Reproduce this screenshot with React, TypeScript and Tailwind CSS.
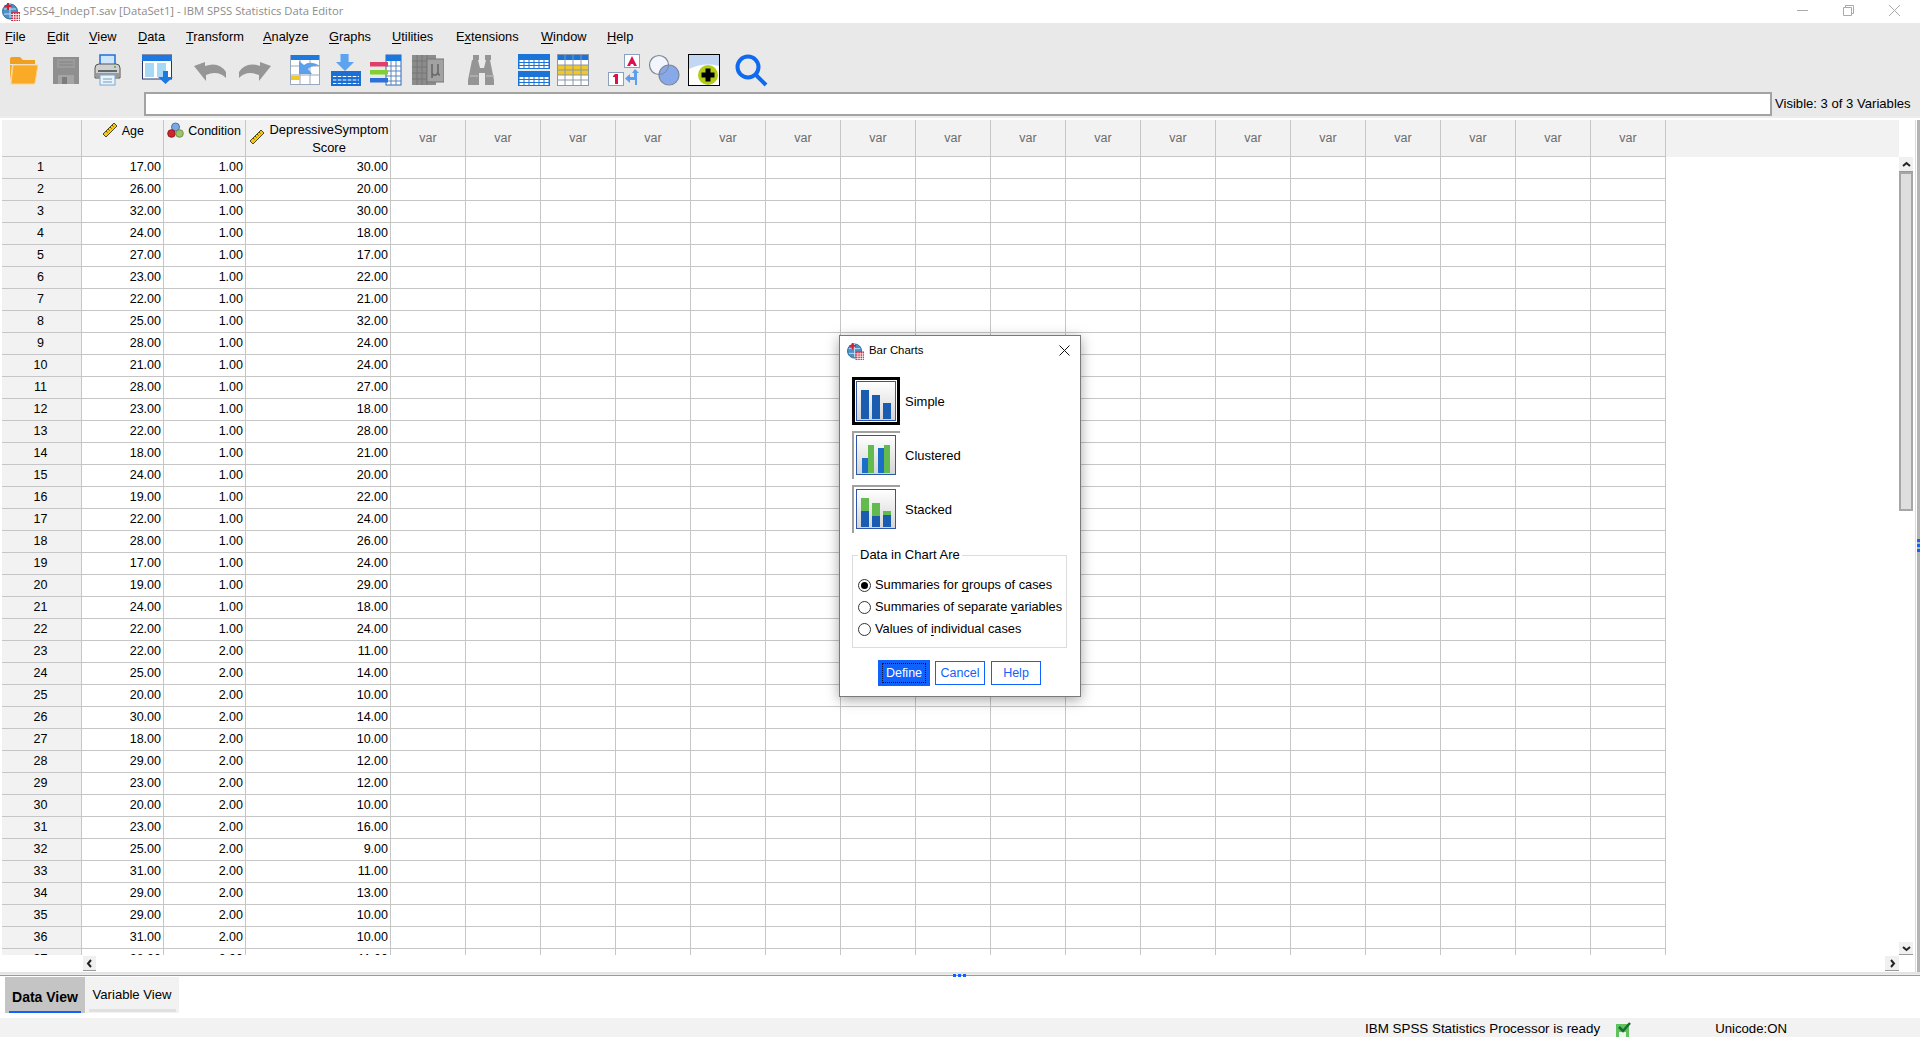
import React from "react";

const ages = [17,26,32,24,27,23,22,25,28,21,28,23,22,18,24,19,22,28,17,19,24,22,22,25,20,30,18,29,23,20,23,25,31,29,29,31,28];
const scores = [30,20,30,18,17,22,21,32,24,24,27,18,28,21,20,22,24,26,24,29,18,24,11,14,10,14,10,12,12,10,16,9,11,13,10,10,11];
const gridCols = "grid grid-cols-[80px_82px_82px_145px_repeat(17,75px)]";
const lineR = "border-r border-[#c6c6c6]";

const Ruler = () => (
  <svg width="16" height="16" viewBox="0 0 16 16" className="shrink-0">
    <path d="M1 12 L12 1 L15 4 L4 15 Z" fill="#f2c521" stroke="#4a4a2a" strokeWidth="1" />
    <path d="M4 9l1.5 1.5M6 7l1.5 1.5M8 5l1.5 1.5M10 3l1.5 1.5" stroke="#4a4a2a" strokeWidth="1" />
  </svg>
);
const Nominal = () => (
  <svg width="17" height="16" viewBox="0 0 17 16" className="shrink-0">
    <circle cx="8.5" cy="5" r="4" fill="#7da7e0" stroke="#4b74b0" />
    <circle cx="4.5" cy="11.5" r="3.8" fill="#d0242f" stroke="#8e1820" />
    <circle cx="12.5" cy="11.5" r="3.8" fill="#9cc46a" stroke="#6d9144" />
  </svg>
);
const AppIcon = ({ s = 18 }: { s?: number }) => (
  <svg width={s} height={s} viewBox="0 0 18 18" className="shrink-0">
    <circle cx="8" cy="8.5" r="7.5" fill="#4d8fc4" stroke="#2f6c9f" />
    <path d="M2 6h12M2 11h10M8 1v14" stroke="#bfe0f5" strokeWidth="1" />
    <path d="M6 0v7M2.5 3h7" stroke="#d81f30" strokeWidth="2" />
    <rect x="9" y="9" width="9" height="9" fill="#c8344a" />
    <path d="M9 11.5h9M9 14h9M9 16.5h9M11.5 10v8M14 10v8M16.5 10v8" stroke="#fff" strokeWidth="0.8" />
  </svg>
);

const Folder = ({ className }: { className: string }) => (
  <svg width="28" height="32" viewBox="0 0 28 32" className={className}>
    <path d="M0 5 Q0 3 2 3 H10 L13 6 H25 V10 H0 Z" fill="#f0a020" />
    <path d="M3 11 H28 L25 29 Q25 30 23 30 H1 Z" fill="#f9aa27" stroke="#fdd48c" strokeWidth="1" />
    <path d="M0 8 V27 L2 11 H0Z" fill="#f5a623" />
  </svg>
);
const Save = ({ className }: { className: string }) => (
  <svg width="26" height="32" viewBox="0 0 26 32" className={className}>
    <rect x="0" y="3" width="26" height="27" fill="#8f8f8f" />
    <rect x="4" y="5" width="18" height="9" fill="#9b9b9b" />
    <path d="M6 8h14M6 11h14" stroke="#848484" />
    <rect x="5" y="21" width="16" height="9" fill="#a5a5a5" />
    <rect x="9" y="23" width="5" height="7" fill="#7c7c7c" />
  </svg>
);
const Printer = ({ className }: { className: string }) => (
  <svg width="27" height="32" viewBox="0 0 27 32" className={className}>
    <rect x="6" y="1" width="15" height="12" fill="#cfe6fa" stroke="#1f6fd6" strokeWidth="1.5" />
    <path d="M1 14 Q1 10 5 10 H22 Q26 10 26 14 V24 H1 Z" fill="#cfd0d2" stroke="#555" />
    <rect x="4" y="16" width="19" height="2" fill="#666" />
    <rect x="20" y="12" width="2" height="2" fill="#52c452" />
    <rect x="2" y="19" width="23" height="4" fill="#9a9a9a" />
    <rect x="6" y="21" width="15" height="10" fill="#e8f3fc" stroke="#7aa8d6" />
    <path d="M9 25h9M9 28h9" stroke="#7c98b5" />
  </svg>
);
const GoTo = ({ className }: { className: string }) => (
  <svg width="31" height="32" viewBox="0 0 31 32" className={className}>
    <rect x="0.5" y="1" width="29" height="24" fill="#fff" stroke="#2c3566" />
    <rect x="0" y="1" width="30" height="6" fill="#1f78e0" />
    <rect x="3" y="9" width="9" height="14" fill="#a5d9f5" />
    <rect x="15" y="9" width="9" height="14" fill="#a5d9f5" />
    <path d="M21 17h5v6h5l-7.500 7-7.500-7h5z" fill="#1f78e0" />
  </svg>
);
const Undo = ({ className, flip }: { className: string; flip?: boolean }) => (
  <svg width="32" height="32" viewBox="0 0 32 32" className={className}>
    <g transform={flip ? "translate(32 0) scale(-1 1)" : undefined}>
      <path d="M0 12 L11 8 V12 Q25 7 32 18 V24 Q24 16 12 21 V27 Z" fill="#969696" />
    </g>
  </svg>
);
const GoVar = ({ className }: { className: string }) => (
  <svg width="30" height="32" viewBox="0 0 30 32" className={className}>
    <rect x="0.5" y="1.500" width="29" height="29" fill="#fff" stroke="#99a8bd" />
    <path d="M10 1v30M20 1v30M0 12h30M0 21h30" stroke="#99a8bd" />
    <rect x="1" y="1" width="28" height="5" fill="#1f78e0" />
    <rect x="1" y="22" width="9" height="4" fill="#f0c828" />
    <path d="M9 7 L14 11 Q20 6 30 12 Q22 11 18 15 L22 20 H9 Z" fill="#5c9fea" />
  </svg>
);
const Insert = ({ className }: { className: string }) => (
  <svg width="30" height="32" viewBox="0 0 30 32" className={className}>
    <path d="M5 0 h9 v9 h6 l-10 10 -10 -10 h5z" transform="translate(5 0) scale(0.9)" fill="#5ca4f0" />
    <rect x="0" y="17" width="30" height="15" fill="#1a6fd4" />
    <path d="M2 22.500h26M2 26h26M2 29.500h26" stroke="#fff" strokeWidth="1.2" />
    <path d="M6 21v9M11 21v9M16 21v9M21 21v9M26 21v9" stroke="#1a6fd4" strokeWidth="1.4" />
  </svg>
);
const VarIcon = ({ className }: { className: string }) => (
  <svg width="32" height="32" viewBox="0 0 32 32" className={className}>
    <rect x="16" y="1" width="15" height="30" fill="#fff" stroke="#2a66b8" />
    <rect x="16" y="1" width="15" height="6" fill="#1a78dc" />
    <path d="M16 12h15M16 17h15M16 22h15M16 27h15M21 7v24M26 7v24" stroke="#5a84bc" />
    <rect x="0" y="8" width="18" height="4.500" fill="#e04068" />
    <rect x="0" y="16" width="18" height="4.500" fill="#7fd030" />
    <rect x="0" y="24" width="18" height="4.500" fill="#2a70d8" />
  </svg>
);
const Mu = ({ className }: { className: string }) => (
  <svg width="32" height="32" viewBox="0 0 32 32" className={className}>
    <rect x="0" y="1" width="24" height="30" fill="#8c8c8c" />
    <path d="M5 1v30M10 1v30M15 1v30M0 7h24M0 13h24M0 19h24M0 25h24" stroke="#777" />
    <rect x="15" y="5" width="17" height="23" fill="#a2a2a2" stroke="#777" />
    <path d="M20 10v14M20 19q1 3 4 2q2-1 2-4v-7M26 18q0 3 2 3" stroke="#686868" strokeWidth="1.600" fill="none" />
  </svg>
);
const Binoc = ({ className }: { className: string }) => (
  <svg width="28" height="32" viewBox="0 0 28 32" className={className}>
    <path d="M5 1h6v5h-1l2 8h4l2-8h-1V1h6v5h-1l4 20v5H17V19h-6v12H0v-5l4-20h1z" fill="#959595" />
    <path d="M2 22h8M18 22h8" stroke="#b5b5b5" strokeWidth="1.500" />
  </svg>
);
const Tables = ({ className }: { className: string }) => (
  <svg width="32" height="32" viewBox="0 0 32 32" className={className}>
    <rect x="0" y="0" width="32" height="15" fill="#1a74d8" />
    <rect x="0" y="17" width="32" height="15" fill="#1a74d8" />
    <rect x="1.500" y="6" width="29" height="8" fill="#fff" />
    <rect x="1.500" y="23" width="29" height="8" fill="#fff" />
    <path d="M0 8.500h32M0 11.500h32M0 25.500h32M0 28.500h32" stroke="#1a74d8" />
    <path d="M6 6v8M11 6v8M16 6v8M21 6v8M26 6v8M6 23v8M11 23v8M16 23v8M21 23v8M26 23v8" stroke="#1a74d8" />
  </svg>
);
const YellowT = ({ className }: { className: string }) => (
  <svg width="32" height="32" viewBox="0 0 32 32" className={className}>
    <rect x="0.500" y="0.500" width="31" height="31" fill="#fff" stroke="#8a97ab" />
    <rect x="1" y="11" width="30" height="10" fill="#f0c828" />
    <rect x="1" y="1" width="30" height="5" fill="#1a74d8" />
    <path d="M8 1v30M16 1v30M24 1v30M0 11h32M0 16h32M0 21h32M0 26h32" stroke="#8a97ab" />
  </svg>
);
const AOne = ({ className }: { className: string }) => (
  <svg width="32" height="32" viewBox="0 0 32 32" className={className}>
    <rect x="16.500" y="0.500" width="15" height="13" fill="#fff" stroke="#8aa0c0" />
    <path d="M24 2 L29 12 H26 L25 10 H23 L22 12 H19 Z" fill="#e0104f" />
    <rect x="0.500" y="18.500" width="15" height="13" fill="#fff" stroke="#8aa0c0" />
    <path d="M7 20h3v10H7v-7H5v-1z" fill="#e0104f" />
    <path d="M27 15 L31 19 H29 V31 H27 V26 H22 V29 L17 24.500 L22 20 V23 H26 V19 H24 Z" fill="#5c9ff0" />
  </svg>
);
const Circles = ({ className }: { className: string }) => (
  <svg width="32" height="32" viewBox="0 0 32 32" className={className}>
    <circle cx="11" cy="11" r="9.500" fill="#f2f5fc" stroke="#7d8798" strokeWidth="1.200" />
    <circle cx="21" cy="21" r="10" fill="#87a9ea" stroke="#7d8798" strokeWidth="1.200" />
    <path d="M11 20.500a9.500 9.500 0 0 0 9.500-9.500" stroke="#7d8798" fill="none" />
  </svg>
);
const PlusBox = ({ className }: { className: string }) => (
  <svg width="32" height="32" viewBox="0 0 32 32" className={className}>
    <rect x="0.500" y="0.500" width="31" height="31" fill="#fff" stroke="#000" />
    <path d="M1 1h30v11q-15-4-30 3z" fill="#c2d8f2" />
    <circle cx="20" cy="21" r="10" fill="#b4cc16" />
    <path d="M17.500 14.500h5v4h4v5h-4v4h-5v-4h-4v-5h4z" fill="#000" />
  </svg>
);
const Magnifier = ({ className }: { className: string }) => (
  <svg width="33" height="33" viewBox="0 0 33 33" className={className}>
    <circle cx="13" cy="13" r="10.500" fill="none" stroke="#0f6af0" strokeWidth="4" />
    <path d="M20.500 20.500 L31 31" stroke="#0f6af0" strokeWidth="4" />
  </svg>
);

const U = ({ children }: { children: React.ReactNode }) => <span className="underline underline-offset-2">{children}</span>;

const menus: [string, string, string, string][] = [
  ["", "F", "ile", "w-[42px]"],
  ["", "E", "dit", "w-[42px]"],
  ["", "V", "iew", "w-[49px]"],
  ["", "D", "ata", "w-[48px]"],
  ["", "T", "ransform", "w-[77px]"],
  ["", "A", "nalyze", "w-[66px]"],
  ["", "G", "raphs", "w-[63px]"],
  ["", "U", "tilities", "w-[64px]"],
  ["E", "x", "tensions", "w-[85px]"],
  ["", "W", "indow", "w-[66px]"],
  ["", "H", "elp", "w-[40px]"],
];

const ChartIcon = ({ kind }: { kind: "simple" | "clustered" | "stacked" }) => (
  <svg width="40" height="40" viewBox="0 0 40 40">
    <defs>
      <linearGradient id={`g-${kind}`} x1="0" y1="0" x2="0" y2="1">
        <stop offset="0" stopColor="#ffffff" />
        <stop offset="1" stopColor="#d4d4d4" />
      </linearGradient>
    </defs>
    <rect x="0.500" y="0.500" width="39" height="39" fill={`url(#g-${kind})`} stroke="#2f56a8" />
    {kind === "simple" && (
      <g fill="#1a5cb0">
        <rect x="5" y="9" width="8" height="29" />
        <rect x="16" y="14" width="8" height="24" />
        <rect x="27" y="22" width="8" height="16" />
      </g>
    )}
    {kind === "clustered" && (
      <g>
        <rect x="6" y="23" width="6" height="15" fill="#1c6fc9" />
        <rect x="12" y="10" width="6" height="28" fill="#61bb4e" />
        <rect x="22" y="13" width="6" height="25" fill="#1c6fc9" />
        <rect x="28" y="10" width="6" height="28" fill="#61bb4e" />
      </g>
    )}
    {kind === "stacked" && (
      <g>
        <rect x="5" y="9" width="8" height="13" fill="#61bb4e" />
        <rect x="5" y="22" width="8" height="16" fill="#1a5cb0" />
        <rect x="16" y="14" width="8" height="13" fill="#61bb4e" />
        <rect x="16" y="27" width="8" height="11" fill="#1a5cb0" />
        <rect x="27" y="22" width="8" height="4" fill="#61bb4e" />
        <rect x="27" y="26" width="8" height="12" fill="#1a5cb0" />
      </g>
    )}
  </svg>
);

const Radio = ({ on, children }: { on?: boolean; children: React.ReactNode }) => (
  <div className="flex h-[22px] items-center pl-[5px]">
    <span className="flex h-[13px] w-[13px] items-center justify-center rounded-full border border-[#333] bg-white">
      {on && <span className="h-[7px] w-[7px] rounded-full bg-black" />}
    </span>
    <span className="ml-[4px] whitespace-nowrap text-[12.8px]">{children}</span>
  </div>
);

const Chev = ({ d }: { d: string }) => (
  <svg width="9" height="7" viewBox="0 0 9 7"><path d={d} fill="none" stroke="#222" strokeWidth="2" /></svg>
);
const ChevSide = ({ d }: { d: string }) => (
  <svg width="7" height="9" viewBox="0 0 7 9"><path d={d} fill="none" stroke="#222" strokeWidth="2" /></svg>
);

export default function App() {
  return (
    <div className="relative flex h-[1037px] w-[1920px] flex-col overflow-hidden bg-white font-['Liberation_Sans',Arial,sans-serif] text-[12.5px] text-black">
      {/* Title bar */}
      <div className="flex h-[23px] shrink-0 items-center bg-white pl-[2px]">
        <AppIcon s={18} />
        <span className="ml-[3px] font-['Open_Sans',sans-serif] text-[11.25px] text-[#8c8c8c]">SPSS4_IndepT.sav [DataSet1] - IBM SPSS Statistics Data Editor</span>
        <div className="-mt-[3px] ml-auto flex items-center gap-[35px] pr-[20px]">
          <svg width="11" height="11" viewBox="0 0 11 11"><path d="M0 5.500h11" stroke="#aaa" /></svg>
          <svg width="11" height="11" viewBox="0 0 11 11"><path d="M.5 2.500h8v8h-8zM2.500 2.500v-2h8v8h-2" fill="none" stroke="#aaa" /></svg>
          <svg width="11" height="11" viewBox="0 0 11 11"><path d="M0 0l11 11M11 0L0 11" stroke="#aaa" /></svg>
        </div>
      </div>

      {/* Menu + toolbar + formula bar */}
      <div className="h-[93px] shrink-0 bg-[#e9e9e9]">
        <div className="flex h-[26px] items-center pt-[1px] pl-[5px] text-[12.8px]">
          {menus.map(([a, b, c, w]) => (
            <span key={b + c} className={`${w} whitespace-nowrap`}>{a}<U>{b}</U>{c}</span>
          ))}
        </div>
        <div className="mt-[5px] flex h-[32px] items-start pl-[10px]">
          <Folder className="shrink-0" />
          <Save className="ml-[15px] shrink-0" />
          <Printer className="ml-[15px] shrink-0" />
          <GoTo className="ml-[21px] shrink-0" />
          <Undo className="ml-[21px] shrink-0" />
          <Undo flip className="ml-[13px] shrink-0" />
          <GoVar className="ml-[19px] shrink-0" />
          <Insert className="ml-[11px] shrink-0" />
          <VarIcon className="ml-[9px] shrink-0" />
          <Mu className="ml-[10px] shrink-0" />
          <Binoc className="ml-[24px] shrink-0" />
          <Tables className="ml-[22px] shrink-0" />
          <YellowT className="ml-[7px] shrink-0" />
          <AOne className="ml-[19px] shrink-0" />
          <Circles className="ml-[8px] shrink-0" />
          <PlusBox className="ml-[8px] shrink-0" />
          <Magnifier className="ml-[15px] shrink-0" />
        </div>
        <div className="mt-[6px] flex h-[24px] items-center pl-[144px]">
          <div className="h-[24px] w-[1628px] border-2 border-[#a3a3a3] bg-white" />
          <span className="ml-[3px] whitespace-nowrap text-[13.1px]">Visible: 3 of 3 Variables</span>
        </div>
      </div>

      {/* Data grid */}
      <div className="flex h-[860px] shrink-0 flex-col bg-white">
        <div className="flex h-[856px] border-t-[2px] border-[#ececec] pt-[2px]">
          <div className="flex w-[1899px] flex-col pl-[2px]">
            <div className="h-[835px] overflow-hidden">
              <div className={`${gridCols} h-[37px] w-[1897px] grid-rows-[37px] bg-[#f2f2f2] [&>div]:border-b [&>div]:border-[#c6c6c6]`}>
                <div className={lineR} />
                <div className={`${lineR} flex items-start justify-end gap-[4px] pt-[2px] pr-[19px]`}><Ruler /><span>Age</span></div>
                <div className={`${lineR} flex items-start justify-end gap-[4px] pt-[2px] pr-[4px]`}><Nominal /><span>Condition</span></div>
                <div className={`${lineR} flex items-start pr-[1px] pl-[3px]`}>
                  <div className="mt-[9px]"><Ruler /></div>
                  <div className="ml-[4px] flex-1 text-center text-[12.9px] leading-[18px] whitespace-nowrap pt-[1px]">DepressiveSymptom<br />Score</div>
                </div>
                {Array.from({ length: 17 }, (_, i) => (
                  <div key={i} className={`${lineR} flex items-center justify-center pt-[1px] text-[#6b6b6b]`}>var</div>
                ))}
              </div>
              {ages.map((age, i) => (
                <div key={i} className={`${gridCols} h-[22px] w-max grid-rows-[22px] [&>div]:border-b [&>div]:border-[#c6c6c6]`}>
                  <div className={`${lineR} flex items-center justify-center bg-[#f2f2f2] pr-[2px]`}>{i + 1}</div>
                  <div className={`${lineR} flex items-center justify-end pr-[2px]`}>{age}.00</div>
                  <div className={`${lineR} flex items-center justify-end pr-[2px]`}>{i < 22 ? "1.00" : "2.00"}</div>
                  <div className={`${lineR} flex items-center justify-end pr-[2px]`}>{scores[i]}.00</div>
                  {Array.from({ length: 17 }, (_, j) => (
                    <div key={j} className={lineR} />
                  ))}
                </div>
              ))}
            </div>
            {/* horizontal scrollbar */}
            <div className="flex h-[16px] items-center pt-[1px] pl-[81px]">
              <div className="flex h-[15px] w-[13px] items-center justify-center border-b border-[#999] bg-[#f0f0f0]"><ChevSide d="M5 1L2 4.500 5 8" /></div>
              <div className="ml-[1789px] flex h-[15px] w-[14px] items-center justify-center border-b border-[#999] bg-[#f0f0f0]"><ChevSide d="M2 1l3 3.500L2 8" /></div>
            </div>
          </div>
          {/* vertical scrollbar */}
          <div className="flex w-[14px] flex-col pt-[37px]">
            <div className="flex h-[15px] items-center justify-center border-b border-[#999] bg-[#f0f0f0]"><Chev d="M1 5l3.500-3L8 5" /></div>
            <div className="h-[339px] border-2 border-[#a6a6a6] bg-[#dedede]" />
            <div className="h-[431px]" />
            <div className="flex h-[13px] items-center justify-center border-b border-[#999] bg-[#f0f0f0]"><Chev d="M1 2l3.500 3L8 2" /></div>
          </div>
          {/* right sash */}
          <div className="ml-[2px] flex w-[5px]">
            <div className="w-[1px] bg-[#dcdcdc]" />
            <div className="w-[1px]" />
            <div className="w-[3px] bg-[#b4b4b4]" />
          </div>
        </div>
        <div className="h-[4px] border-t-[2px] border-b-[1px] border-t-[#e4e4e4] border-b-[#9a9a9a] bg-[#ededed]" />
      </div>

      {/* Tabs */}
      <div className="flex h-[42px] shrink-0 items-start pt-[1px] pl-[5px]">
        <div className="flex h-[36px] w-[80px] flex-col items-center bg-[#c4c4c4] text-[14px] font-bold">
          <span className="mt-[12px] leading-[16px]">Data View</span>
          <span className="mt-auto h-[2px] w-[72px] bg-[#0f62fe]" />
        </div>
        <div className="flex h-[36px] w-[94px] flex-col items-center bg-[#f2f2f2] text-[13.1px]">
          <span className="mt-[10px] leading-[16px]">Variable View</span>
          <span className="mt-[6px] h-[3px] w-[87px] bg-[#e0e0e0]" />
        </div>
      </div>

      {/* Status bar */}
      <div className="flex h-[19px] shrink-0 items-center bg-[#f2f2f2] pt-[3px] pl-[1365px] text-[13.4px]">
        <span className="whitespace-nowrap">IBM SPSS Statistics Processor is ready</span>
        <svg width="15" height="15" viewBox="0 0 15 15" className="ml-[16px]">
          <rect x="0" y="2" width="13" height="13" fill="#5fc25f" />
          <rect x="3" y="10" width="7" height="5" fill="#e8f5e8" />
          <path d="M3 5l4 4 7-8" fill="none" stroke="#166e2e" strokeWidth="2.500" />
        </svg>
        <span className="ml-[84px] whitespace-nowrap text-[13.2px]">Unicode:ON</span>
      </div>

      {/* Sash grips */}
      <div className="absolute top-[539px] left-[1917px] flex flex-col gap-[2px]">
        <span className="h-[3px] w-[3px] bg-[#0f62fe]" />
        <span className="h-[3px] w-[3px] bg-[#0f62fe]" />
        <span className="h-[3px] w-[3px] bg-[#0f62fe]" />
      </div>
      <div className="absolute top-[974px] left-[953px] flex gap-[2px]">
        <span className="h-[3px] w-[3px] bg-[#0f62fe]" />
        <span className="h-[3px] w-[3px] bg-[#0f62fe]" />
        <span className="h-[3px] w-[3px] bg-[#0f62fe]" />
      </div>

      {/* Bar Charts dialog */}
      <div className="absolute top-[335px] left-[839px] flex h-[362px] w-[242px] flex-col border border-[#7a7a7a] bg-white shadow-[0_3px_12px_rgba(0,0,0,0.35)]">
        <div className="flex h-[30px] items-center pl-[7px]">
          <AppIcon s={17} />
          <span className="ml-[5px] text-[11.4px]">Bar Charts</span>
          <svg width="11" height="11" viewBox="0 0 11 11" className="mr-[10px] mb-[2px] ml-auto"><path d="M.5.5l10 10M10.500.5l-10 10" stroke="#111" /></svg>
        </div>
        <div className="flex flex-col gap-[6px] pt-[11px] pl-[12px] text-[13px]">
          <div className="flex h-[48px] items-center">
            <div className="flex h-[48px] w-[48px] items-center justify-center border-[3px] border-black"><ChartIcon kind="simple" /></div>
            <span className="mt-[2px] ml-[5px]">Simple</span>
          </div>
          <div className="flex h-[48px] items-center">
            <div className="flex h-[48px] w-[48px] items-start justify-start border-t-2 border-l-2 border-[#a0a0a0] pt-[2px] pl-[2px]"><ChartIcon kind="clustered" /></div>
            <span className="mt-[2px] ml-[5px]">Clustered</span>
          </div>
          <div className="flex h-[48px] items-center">
            <div className="flex h-[48px] w-[48px] items-start justify-start border-t-2 border-l-2 border-[#a0a0a0] pt-[2px] pl-[2px]"><ChartIcon kind="stacked" /></div>
            <span className="mt-[2px] ml-[5px]">Stacked</span>
          </div>
        </div>
        <div className="relative mt-[22px] ml-[12px] h-[93px] w-[215px] border border-[#dcdcdc] pt-[18px]">
          <span className="absolute -top-[9px] left-[5px] bg-white px-[2px] text-[13px] leading-[16px]">Data in Chart Are</span>
          <Radio on>Summaries for <U>g</U>roups of cases</Radio>
          <Radio>Summaries of separate <U>v</U>ariables</Radio>
          <Radio>Values of <U>i</U>ndividual cases</Radio>
        </div>
        <div className="mt-[12px] flex items-center pl-[38px]">
          <div className="flex h-[26px] w-[52px] items-center justify-center bg-[#0f62fe] text-white">
            <span className="flex h-[20px] w-[44px] items-center justify-center border border-dotted border-[#001141]">Define</span>
          </div>
          <div className="ml-[5px] flex h-[24px] w-[50px] items-center justify-center border border-[#0f62fe] text-[#0f62fe]">Cancel</div>
          <div className="ml-[6px] flex h-[24px] w-[50px] items-center justify-center border border-[#0f62fe] text-[#0f62fe]">Help</div>
        </div>
      </div>
    </div>
  );
}
